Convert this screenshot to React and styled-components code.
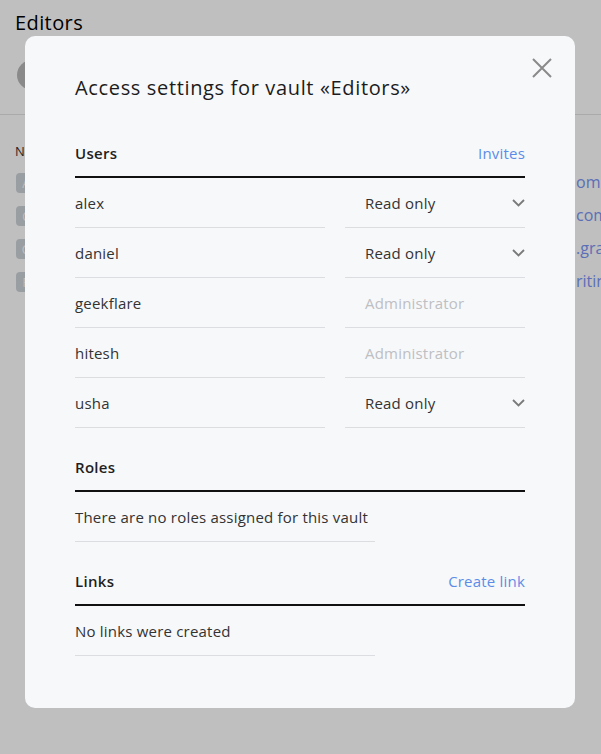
import React from "react";
import styled, { createGlobalStyle } from "styled-components";

const GlobalStyle = createGlobalStyle`
  html, body {
    margin: 0;
    padding: 0;
    background: #ffffff;
    font-family: "Open Sans", "Noto Sans", sans-serif;
  }
`;

const Page = styled.div`
  position: relative;
  width: 601px;
  height: 754px;
  overflow: hidden;
  background: #ffffff;
`;

const PageHeader = styled.div`
  padding: 10px 15px 0;
  h1 {
    margin: 0;
    font-size: 20px;
    line-height: 26px;
    font-weight: 500;
    letter-spacing: 0.4px;
    color: #000;
  }
`;

const Avatar = styled.div`
  width: 30px;
  height: 30px;
  margin: 24px 0 0 17px;
  border-radius: 50%;
  background: #b8b8b8;
`;

const Divider = styled.div`
  height: 1px;
  margin-top: 24px;
  background: #e3e3e3;
`;

const Table = styled.div`
  padding: 27px 15px 0;
  display: flex;
  flex-direction: column;
  gap: 13px;
`;

const TableHead = styled.div`
  font-size: 13px;
  line-height: 18px;
  letter-spacing: 1px;
  color: #333;
`;

const TableRow = styled.div`
  display: flex;
  justify-content: space-between;
  align-items: center;
  height: 20px;
  padding-left: 1px;
`;

const Badge = styled.span`
  display: inline-flex;
  align-items: center;
  justify-content: center;
  width: 20px;
  height: 20px;
  border-radius: 4px;
  background: #cdd3d9;
  color: #fff;
  font-size: 12px;
`;

const Url = styled.span`
  color: #7a94f5;
  font-size: 16px;
  white-space: nowrap;
  width: 25px;
  margin-right: -15px;
  position: relative;
  top: -1px;
`;

const Overlay = styled.div`
  position: absolute;
  inset: 0;
  background: rgba(0, 0, 0, 0.25);
`;

const Modal = styled.div`
  position: absolute;
  left: 25px;
  top: 36px;
  width: 550px;
  height: 672px;
  box-sizing: border-box;
  padding: 40px 50px 0;
  border-radius: 10px;
  background: #f7f8fa;
  color: #222;
`;

const Close = styled.button`
  position: absolute;
  top: 22px;
  right: 23px;
  width: 20px;
  height: 20px;
  padding: 0;
  border: 0;
  background: none;
  cursor: pointer;
  svg {
    display: block;
  }
`;

const Title = styled.h2`
  margin: 0 0 14px;
  font-size: 20px;
  line-height: 24px;
  font-weight: 500;
  letter-spacing: 0.65px;
  color: #1c1c1c;
`;

const SectionHeader = styled.div`
  display: flex;
  justify-content: space-between;
  align-items: center;
  padding: 28px 0 12px;
  line-height: 22px;
  border-bottom: 2px solid #111;
  font-size: 15px;
  strong {
    font-weight: 600;
    letter-spacing: 0.3px;
    color: #1f1f1f;
  }
`;

const Link = styled.a`
  color: #5b8de8;
  font-size: 15px;
  letter-spacing: 0.2px;
  text-decoration: none;
  cursor: pointer;
`;

const UserRow = styled.div`
  display: grid;
  grid-template-columns: 250px 180px;
  column-gap: 20px;
`;

const Cell = styled.div`
  display: flex;
  align-items: center;
  justify-content: space-between;
  height: 50px;
  box-sizing: border-box;
  border-bottom: 1px solid #dcdde0;
  font-size: 15px;
  letter-spacing: 0.2px;
  color: ${(p) => (p.$muted ? "#bdbfc3" : "#333")};
  padding-left: ${(p) => (p.$select ? "20px" : "0")};
  width: ${(p) => (p.$wide ? "300px" : "auto")};
`;

const Chevron = () => (
  <svg width="13" height="8" viewBox="0 0 13 8" fill="none">
    <path d="M1 1l5.5 5.5L12 1" stroke="#7a7a7a" strokeWidth="1.8" />
  </svg>
);

const users = [
  { name: "alex", role: "Read only", editable: true },
  { name: "daniel", role: "Read only", editable: true },
  { name: "geekflare", role: "Administrator", editable: false },
  { name: "hitesh", role: "Administrator", editable: false },
  { name: "usha", role: "Read only", editable: true },
];

const bgRows = [
  { letter: "A", url: "om" },
  { letter: "C", url: "com" },
  { letter: "G", url: ".gra" },
  { letter: "P", url: "ritin" },
];

export default function App() {
  return (
    <>
      <GlobalStyle />
      <Page>
        <PageHeader>
          <h1>Editors</h1>
        </PageHeader>
        <Avatar />
        <Divider />
        <Table>
          <TableHead>NAME</TableHead>
          {bgRows.map((r) => (
            <TableRow key={r.letter}>
              <Badge>{r.letter}</Badge>
              <Url>{r.url}</Url>
            </TableRow>
          ))}
        </Table>
        <Overlay />
        <Modal>
          <Close aria-label="Close">
            <svg width="20" height="20" viewBox="0 0 20 20">
              <path d="M1 1l18 18M19 1L1 19" stroke="#8a8a8a" strokeWidth="2" />
            </svg>
          </Close>
          <Title>Access settings for vault «Editors»</Title>

          <SectionHeader>
            <strong>Users</strong>
            <Link>Invites</Link>
          </SectionHeader>
          {users.map((u) => (
            <UserRow key={u.name}>
              <Cell>{u.name}</Cell>
              <Cell $select $muted={!u.editable}>
                {u.role}
                {u.editable && <Chevron />}
              </Cell>
            </UserRow>
          ))}

          <SectionHeader>
            <strong>Roles</strong>
          </SectionHeader>
          <Cell $wide>There are no roles assigned for this vault</Cell>

          <SectionHeader>
            <strong>Links</strong>
            <Link>Create link</Link>
          </SectionHeader>
          <Cell $wide>No links were created</Cell>
        </Modal>
      </Page>
    </>
  );
}
